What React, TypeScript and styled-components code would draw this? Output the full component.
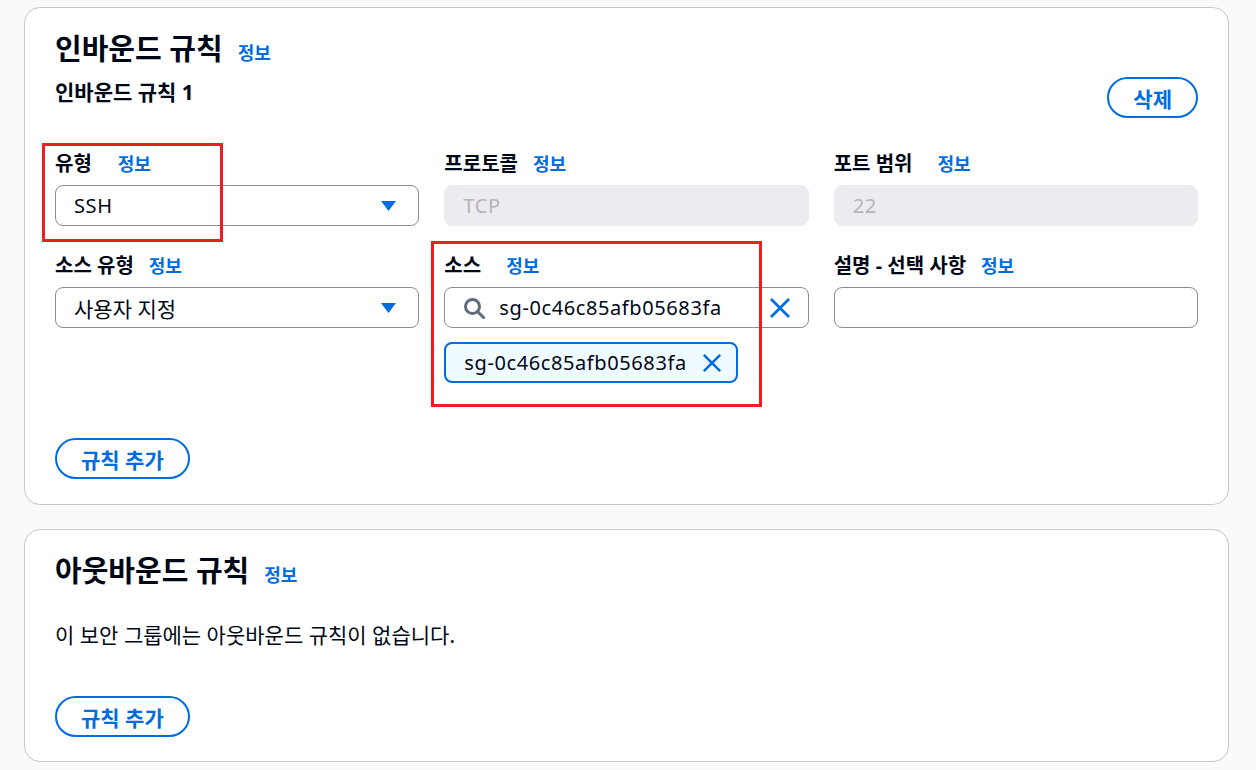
import React from 'react';
import styled, { createGlobalStyle } from 'styled-components';

const GlobalStyle = createGlobalStyle`
  body {
    margin: 0;
    background: #fafafa;
    color: #000716;
    font-family: "Noto Sans", "Noto Sans CJK KR", sans-serif;
  }
`;

// Layout
const Page = styled.div`
  display: flex;
  flex-direction: column;
  gap: 24px;
  padding: 7px 27px 0 24px;
`;

const Card = styled.section<{ $bottom?: number }>`
  position: relative;
  background: #ffffff;
  border: 1px solid #c6c6cd;
  border-radius: 16px;
  padding: 22px 30px ${(p) => p.$bottom ?? 24}px;
`;

const HeadingRow = styled.div`
  display: flex;
  align-items: baseline;
  gap: 15px;
`;

const Title = styled.h2`
  margin: 0;
  font-size: 29px;
  font-weight: 700;
  line-height: 38px;
`;

const InfoLink = styled.a`
  font-size: 18px;
  font-weight: 700;
  color: #006ce0;
  text-decoration: none;
  cursor: pointer;
`;

const RuleHeader = styled.div`
  display: flex;
  justify-content: space-between;
  align-items: flex-start;
`;

const RuleTitle = styled.div`
  margin-top: 11px;
  font-size: 21px;
  font-weight: 700;
  line-height: 26px;
`;

const OutlineButton = styled.button<{ $top?: number }>`
  height: 41px;
  margin-top: ${(p) => p.$top ?? 0}px;
  padding: 0 24px;
  border: 2px solid #006ce0;
  border-radius: 21px;
  background: #ffffff;
  color: #006ce0;
  font-family: inherit;
  font-size: 21px;
  font-weight: 700;
  cursor: pointer;
  align-self: flex-start;
`;

const FieldGrid = styled.div`
  display: grid;
  grid-template-columns: repeat(3, 1fr);
  column-gap: 25px;
  row-gap: 28px;
  margin-top: 34px;
`;

const Field = styled.div`
  position: relative;
  display: flex;
  flex-direction: column;
  gap: 9px;
`;

const LabelRow = styled.div<{ $gap: number }>`
  display: flex;
  align-items: baseline;
  gap: ${(p) => p.$gap}px;
  line-height: 24px;
`;

const Label = styled.label`
  font-size: 20px;
  font-weight: 700;
`;

const InputBox = styled.div<{ $disabled?: boolean }>`
  display: flex;
  align-items: center;
  height: 41px;
  box-sizing: border-box;
  padding: 0 22px 0 18px;
  border: 1px solid ${(p) => (p.$disabled ? '#ebebf0' : '#8c8c94')};
  border-radius: 8px;
  background: ${(p) => (p.$disabled ? '#ebebf0' : '#ffffff')};
  color: ${(p) => (p.$disabled ? '#b4b4bb' : '#000716')};
  font-size: 20px;
`;

const SearchBox = styled(InputBox)`
  padding: 0 17px 0 18px;
  gap: 14px;
`;

const Value = styled.span<{ $ko?: boolean }>`
  flex: 1;
  font-size: ${(p) => (p.$ko ? 21 : 20)}px;
  letter-spacing: ${(p) => (p.$ko ? 0 : 0.6)}px;
  white-space: nowrap;
`;

const SourceStack = styled.div`
  display: flex;
  flex-direction: column;
  gap: 14px;
`;

const Token = styled.div`
  align-self: flex-start;
  display: inline-flex;
  align-items: center;
  gap: 15px;
  height: 41px;
  box-sizing: border-box;
  padding: 0 14px 0 18px;
  border: 2px solid #006ce0;
  border-radius: 8px;
  background: #f0fbff;
  font-size: 20px;
  letter-spacing: 0.6px;
`;

const AddRow = styled.div<{ $top: number }>`
  display: flex;
  margin-top: ${(p) => p.$top}px;
`;

const BodyText = styled.p`
  margin: 32px 0 0;
  font-size: 21px;
  line-height: 26px;
`;

// Red annotation frames drawn over the screenshot
const Highlight = styled.div<{ $top: number; $left: number; $w: number; $h: number }>`
  position: absolute;
  top: ${(p) => p.$top}px;
  left: ${(p) => p.$left}px;
  width: ${(p) => p.$w}px;
  height: ${(p) => p.$h}px;
  box-sizing: border-box;
  border: 3px solid #ee1d23;
  pointer-events: none;
`;

// Icons
const CaretDown = () => (
  <svg width="15" height="10" viewBox="0 0 15 10">
    <polygon points="0,0 15,0 7.5,10" fill="#006ce0" />
  </svg>
);

const SearchIcon = () => (
  <svg width="22" height="22" viewBox="0 0 22 22" fill="none">
    <circle cx="9.5" cy="9.5" r="7" stroke="#5f6b7a" strokeWidth="3" />
    <line x1="14.5" y1="14.5" x2="20.5" y2="20.5" stroke="#5f6b7a" strokeWidth="3" strokeLinecap="round" />
  </svg>
);

const CloseIcon = ({ size = 22 }: { size?: number }) => (
  <svg width={size} height={size} viewBox="0 0 22 22" fill="none">
    <path d="M2 2 L20 20 M20 2 L2 20" stroke="#006ce0" strokeWidth="2.8" />
  </svg>
);

interface FieldLabelProps {
  text: string;
  gap?: number;
}

const FieldLabel: React.FC<FieldLabelProps> = ({ text, gap = 15 }) => (
  <LabelRow $gap={gap}>
    <Label>{text}</Label>
    <InfoLink>정보</InfoLink>
  </LabelRow>
);

const sourceId = 'sg-0c46c85afb05683fa';

const App: React.FC = () => {
  return (
    <>
      <GlobalStyle />
      <Page>
        <Card $bottom={25}>
          <HeadingRow>
            <Title>인바운드 규칙</Title>
            <InfoLink>정보</InfoLink>
          </HeadingRow>
          <RuleHeader>
            <RuleTitle>인바운드 규칙 1</RuleTitle>
            <OutlineButton type="button" $top={9}>삭제</OutlineButton>
          </RuleHeader>

          <FieldGrid>
            <Field>
              <FieldLabel text="유형" gap={26} />
              <InputBox>
                <Value>SSH</Value>
                <CaretDown />
              </InputBox>
              <Highlight $top={-9} $left={-13} $w={181} $h={99} />
            </Field>
            <Field>
              <FieldLabel text="프로토콜" />
              <InputBox $disabled>
                <Value>TCP</Value>
              </InputBox>
            </Field>
            <Field>
              <FieldLabel text="포트 범위" gap={25} />
              <InputBox $disabled>
                <Value>22</Value>
              </InputBox>
            </Field>

            <Field>
              <FieldLabel text="소스 유형" />
              <InputBox>
                <Value $ko>사용자 지정</Value>
                <CaretDown />
              </InputBox>
            </Field>
            <Field>
              <FieldLabel text="소스" gap={25} />
              <SourceStack>
                <SearchBox>
                  <SearchIcon />
                  <Value>{sourceId}</Value>
                  <CloseIcon />
                </SearchBox>
                <Token>
                  <span>{sourceId}</span>
                  <CloseIcon size={20} />
                </Token>
              </SourceStack>
              <Highlight $top={-13} $left={-13} $w={331} $h={166} />
            </Field>
            <Field>
              <FieldLabel text="설명 - 선택 사항" />
              <InputBox />
            </Field>
          </FieldGrid>

          <AddRow $top={55}>
            <OutlineButton type="button">규칙 추가</OutlineButton>
          </AddRow>
        </Card>

        <Card>
          <HeadingRow>
            <Title>아웃바운드 규칙</Title>
            <InfoLink>정보</InfoLink>
          </HeadingRow>
          <BodyText>이 보안 그룹에는 아웃바운드 규칙이 없습니다.</BodyText>
          <AddRow $top={48}>
            <OutlineButton type="button">규칙 추가</OutlineButton>
          </AddRow>
        </Card>
      </Page>
    </>
  );
};

export default App;
